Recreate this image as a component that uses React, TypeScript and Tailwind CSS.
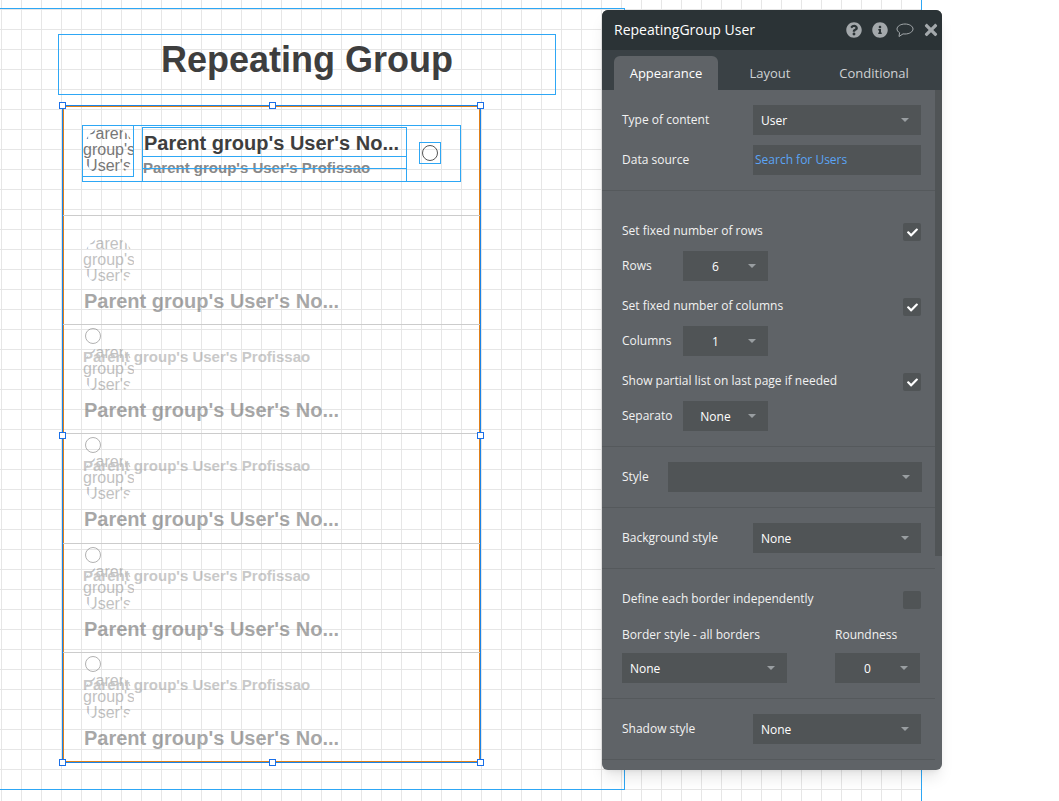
import React from 'react';
import { FaCheck, FaInfoCircle, FaQuestionCircle, FaTimes } from 'react-icons/fa';

const Handle = ({ className }: { className: string }) => (
  <div className={`absolute w-1.75 h-1.75 bg-white border border-[#1a6fe8] ${className}`} />
);

const Arrow = () => (
  <svg width="8" height="4" viewBox="0 0 8 4" className="shrink-0">
    <polygon points="0,0 8,0 4,4" fill="#999ea1" />
  </svg>
);

const Dropdown = ({
  value,
  center,
  className = 'w-42'
}: {
  value?: string;
  center?: boolean;
  className?: string;
}) => (
  <div className={`h-7.5 bg-[#505456] flex items-center justify-between pl-2 pr-3 text-white ${className}`}>
    <span className={`pt-0.5 ${center ? 'flex-1 text-center -ml-2' : ''}`}>{value}</span>
    <Arrow />
  </div>
);

const Checkbox = ({ checked }: { checked?: boolean }) => (
  <div className="w-4.5 h-4.5 bg-[#505456] rounded-xs flex items-center justify-center text-white">
    {checked && <FaCheck size={11} />}
  </div>
);

const Section = ({ children, className = 'py-3.75' }: { children: React.ReactNode; className?: string }) => (
  <div className={`border-b border-[#55595c] mr-1.75 pl-5 pr-3.5 ${className}`}>{children}</div>
);

const CheckRow = ({ label, checked }: { label: string; checked?: boolean }) => (
  <div className="flex items-center justify-between h-4.5">
    <span className="-mt-0.5">{label}</span>
    <Checkbox checked={checked} />
  </div>
);

const NumberRow = ({ label, value }: { label: string; value: string }) => (
  <div className="flex items-center">
    <span className="w-[51px] mr-2.5 overflow-hidden whitespace-nowrap">{label}</span>
    <Dropdown value={value} center className="w-[85px]" />
  </div>
);

const LabelRow = ({ label, children }: { label: string; children: React.ReactNode }) => (
  <div className="flex items-center justify-between">
    <span>{label}</span>
    {children}
  </div>
);

const AltImage = ({ className }: { className: string }) => (
  <div
    className={`absolute w-[51px] h-[51px] rounded-full overflow-hidden text-center text-base leading-4 text-[#777] ${className}`}
  >
    Parent group's User's
  </div>
);

const FadedRow = ({ extras }: { extras?: boolean }) => (
  <div className="relative border-b border-[#cccccc] last:border-b-0">
    <div className="absolute inset-0 opacity-45 font-bold">
      {extras && (
        <>
          <div className="absolute left-[22px] top-[3px] w-4 h-4 rounded-full border border-[#555]" />
          <div className="absolute left-5 top-[21px] text-[15px] text-[#888] whitespace-nowrap">
            Parent group's User's Profissao
          </div>
        </>
      )}
      <div className="font-normal">
        <AltImage className="left-5 top-5" />
      </div>
      <div className="absolute left-[21px] top-[71px] text-xl text-[#3e3e3e] whitespace-nowrap">
        Parent group's User's No...
      </div>
    </div>
  </div>
);

export default function App() {
  return (
    <div className="relative w-[1059px] h-[801px] overflow-hidden bg-white font-['Liberation_Sans',sans-serif]">
      {/* Canvas */}
      <div className="absolute inset-y-0 left-0 w-[922px] border-r border-[#2ea7f5] bg-[linear-gradient(#e6e6e6_1px,transparent_1px),linear-gradient(90deg,#e6e6e6_1px,transparent_1px)] bg-[size:20px_20px] bg-[position:1px_9px]" />
      <div className="absolute -left-px top-2 w-[626px] h-[782px] border border-[#2ea7f5]" />

      {/* Title */}
      <div className="absolute left-[58px] top-[34px] w-[498px] h-[61px] border border-[#2ea7f5] flex items-center justify-center pb-2.5 text-4xl font-bold text-[#3e3e3e]">
        Repeating Group
      </div>

      {/* Repeating group */}
      <div className="absolute left-[62px] top-[105px] w-[419px] h-[658px] border border-[#1a84e8]">
        <div className="absolute inset-0 border border-[#e0801a]" />
        <div className="h-full pt-px grid grid-rows-6">
          <div className="relative border-b border-[#cccccc]">
            <div className="absolute left-[19px] top-[18px] w-[379px] h-[57px] border border-[#2ea7f5]" />
            <AltImage className="left-5 top-[19px]" />
            <div className="absolute left-[19px] top-[18px] w-[52px] h-[52px] border border-[#2ea7f5]" />
            <div className="absolute left-[79px] top-5 w-[265px] h-[55px] border border-[#2ea7f5]" />
            <div className="absolute left-[81px] top-[22px] text-xl font-bold text-[#3e3e3e] whitespace-nowrap leading-7">
              Parent group's User's No...
            </div>
            <div className="absolute left-20 top-[50px] text-[15px] font-bold text-[#888] whitespace-nowrap">
              Parent group's User's Profissao
            </div>
            <div className="absolute left-[79px] top-[49px] w-[265px] h-[13px] border border-[#2ea7f5]" />
            <div className="absolute left-[356px] top-[35px] w-[22px] h-[22px] border border-[#2ea7f5] flex items-center justify-center">
              <div className="w-4 h-4 rounded-full border border-[#555]" />
            </div>
          </div>
          <FadedRow />
          <FadedRow extras />
          <FadedRow extras />
          <FadedRow extras />
          <FadedRow extras />
        </div>
      </div>

      <Handle className="left-[59px] top-[102px]" />
      <Handle className="left-[269px] top-[102px]" />
      <Handle className="left-[477px] top-[102px]" />
      <Handle className="left-[59px] top-[432px]" />
      <Handle className="left-[477px] top-[432px]" />
      <Handle className="left-[59px] top-[759px]" />
      <Handle className="left-[269px] top-[759px]" />
      <Handle className="left-[477px] top-[759px]" />

      {/* Property editor */}
      <div className="absolute left-[602px] top-2.5 w-85 h-190 rounded-md overflow-hidden bg-[#5f6367] shadow-lg font-['Open_Sans',sans-serif] text-xs text-[#f2f2f2]">
        <div className="h-10 bg-[#2b3336] flex items-center justify-between px-3 text-sm text-white">
          <span>RepeatingGroup User</span>
          <div className="flex items-center gap-2.5 text-[#a3a8ab] -mr-2.5">
            <FaQuestionCircle size={16} />
            <FaInfoCircle size={16} />
            <svg width="18" height="15" viewBox="0 0 18 15" fill="none" stroke="currentColor" strokeWidth="1" className="-ml-0.5 -mr-0.5">
              <path d="M9 1C4.6 1 1 3.2 1 6c0 1.5 1 2.8 2.6 3.7L3 13.5l4-2.6c.6.1 1.3.1 2 .1 4.4 0 8-2.2 8-5s-3.6-5-8-5z" />
            </svg>
            <FaTimes size={18} />
          </div>
        </div>

        <div className="h-10 bg-[#3a4145] flex items-end px-3 text-[13px]">
          <div className="w-26 h-8.5 pt-0.5 bg-[#5f6367] rounded-t-md flex items-center justify-center text-white">Appearance</div>
          <div className="w-26 h-8.5 pt-0.5 flex items-center justify-center text-[#cfd2d4]">Layout</div>
          <div className="w-26 h-8.5 pt-0.5 flex items-center justify-center text-[#cfd2d4]">Conditional</div>
        </div>

        <div className="absolute right-0 top-20 bottom-[214px] w-1.75 bg-[#505456]" />

        <Section>
          <div className="flex flex-col gap-2.5">
            <LabelRow label="Type of content">
              <Dropdown value="User" />
            </LabelRow>
            <LabelRow label="Data source">
              <div className="w-42 h-7.5 bg-[#505456] flex items-center px-0.5 text-[#5ba4f5]">Search for Users</div>
            </LabelRow>
          </div>
        </Section>

        <Section className="pt-8 pb-3.75">
          <div className="flex flex-col gap-4.25">
            <div className="flex flex-col gap-2.5">
              <CheckRow label="Set fixed number of rows" checked />
              <NumberRow label="Rows" value="6" />
            </div>
            <div className="flex flex-col gap-2.5">
              <CheckRow label="Set fixed number of columns" checked />
              <NumberRow label="Columns" value="1" />
            </div>
            <div className="flex flex-col gap-2.5">
              <CheckRow label="Show partial list on last page if needed" checked />
              <NumberRow label="Separator" value="None" />
            </div>
          </div>
        </Section>

        <Section>
          <div className="flex items-center">
            <span className="w-[46px]">Style</span>
            <Dropdown className="flex-1 -mr-px" />
          </div>
        </Section>

        <Section>
          <LabelRow label="Background style">
            <Dropdown value="None" />
          </LabelRow>
        </Section>

        <Section className="pt-5.5 pb-3.75">
          <CheckRow label="Define each border independently" />
          <div className="flex justify-between mt-4 pr-px">
            <div className="w-[165px]">
              <div className="h-4.5 leading-5 mb-2.5">Border style - all borders</div>
              <Dropdown value="None" className="w-full" />
            </div>
            <div className="w-[85px]">
              <div className="h-4.5 leading-5 mb-2.5">Roundness</div>
              <Dropdown value="0" center className="w-full" />
            </div>
          </div>
        </Section>

        <Section>
          <LabelRow label="Shadow style">
            <Dropdown value="None" />
          </LabelRow>
        </Section>
      </div>
    </div>
  );
}
